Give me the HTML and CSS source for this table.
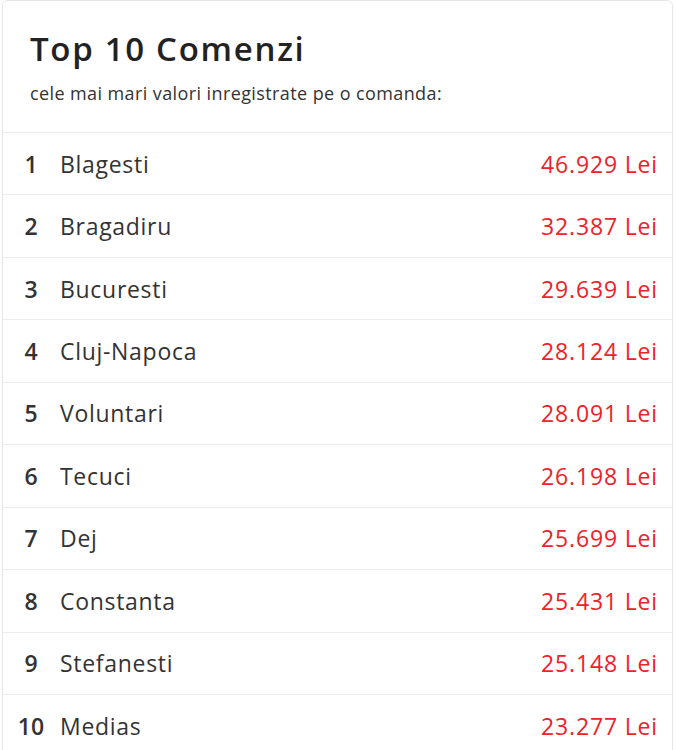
FILE: index.html
```html
<!DOCTYPE html>
<html lang="ro">
<head>
<meta charset="utf-8">
<title>Top 10 Comenzi</title>
<link rel="stylesheet" href="styles.css">
</head>
<body>
<div class="card">
  <div class="card-head">
    <h1 class="title">Top 10 Comenzi</h1>
    <p class="subtitle">cele mai mari valori inregistrate pe o comanda:</p>
  </div>
  <ul class="list">
    <li class="row"><span class="rank">1</span><span class="city">Blagesti</span><span class="value">46.929 Lei</span></li>
    <li class="row"><span class="rank">2</span><span class="city">Bragadiru</span><span class="value">32.387 Lei</span></li>
    <li class="row"><span class="rank">3</span><span class="city">Bucuresti</span><span class="value">29.639 Lei</span></li>
    <li class="row"><span class="rank">4</span><span class="city">Cluj-Napoca</span><span class="value">28.124 Lei</span></li>
    <li class="row"><span class="rank">5</span><span class="city">Voluntari</span><span class="value">28.091 Lei</span></li>
    <li class="row"><span class="rank">6</span><span class="city">Tecuci</span><span class="value">26.198 Lei</span></li>
    <li class="row"><span class="rank">7</span><span class="city">Dej</span><span class="value">25.699 Lei</span></li>
    <li class="row"><span class="rank">8</span><span class="city">Constanta</span><span class="value">25.431 Lei</span></li>
    <li class="row"><span class="rank">9</span><span class="city">Stefanesti</span><span class="value">25.148 Lei</span></li>
    <li class="row"><span class="rank">10</span><span class="city">Medias</span><span class="value">23.277 Lei</span></li>
  </ul>
</div>
</body>
</html>
```
FILE: styles.css
```css
html, body {
  margin: 0;
  padding: 0;
  background: #ffffff;
}
body {
  font-family: "Open Sans", "Noto Sans", sans-serif;
  color: #333333;
}
.card {
  margin-left: 2px;
  width: 669px;
  border: 1px solid #e6e6e6;
  border-radius: 6px;
  background: #ffffff;
  height: 780px;
}
.card-head {
  padding: 25px 20px 0 27px;
  height: 106px;
  border-bottom: 1px solid #ededed;
}
.title {
  margin: 0;
  font-size: 33px;
  line-height: 46px;
  font-weight: 600;
  letter-spacing: 1.7px;
  color: #222222;
}
.subtitle {
  margin: 9px 0 0;
  font-size: 18px;
  line-height: 24px;
  letter-spacing: 0.4px;
  color: #333333;
}
.list {
  list-style: none;
  margin: 0;
  padding: 0;
}
.row {
  display: flex;
  align-items: center;
  height: 61.44px;
  border-bottom: 1px solid #ededed;
  padding: 0 14px 0 8px;
  font-size: 23px;
  letter-spacing: 0.7px;
}
.rank {
  width: 40px;
  text-align: center;
  font-weight: 600;
  letter-spacing: 0;
  color: #333333;
}
.city {
  flex: 1;
  margin-left: 9px;
  color: #333333;
}
.value {
  color: #ee2229;
  letter-spacing: 0.85px;
}
```
